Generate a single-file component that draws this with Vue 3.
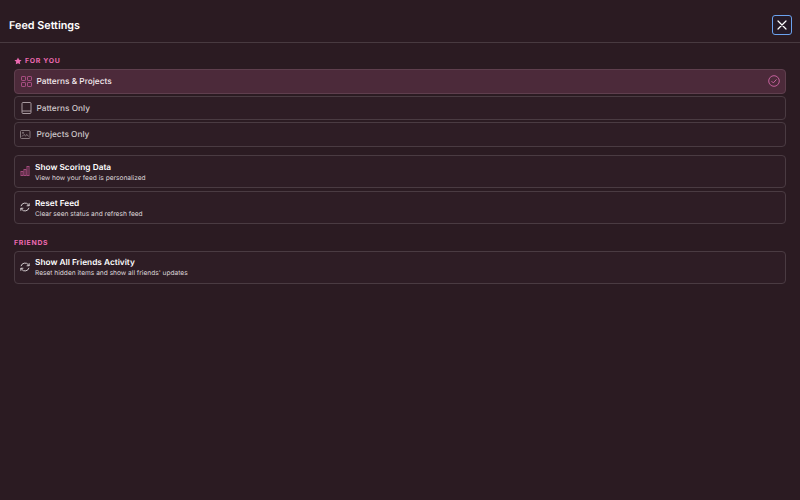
<script setup>
const feedOptions = [
  { label: 'Patterns & Projects', icon: 'grid', active: true },
  { label: 'Patterns Only', icon: 'book' },
  { label: 'Projects Only', icon: 'image' },
]
</script>

<template>
  <div class="page">
    <header class="head">
      <h1>Feed Settings</h1>
      <button class="close" aria-label="Close">
        <svg width="10" height="10" viewBox="0 0 10 10" fill="none" stroke="#fff" stroke-width="1.2" stroke-linecap="round"><path d="M1 1l8 8M9 1l-8 8"/></svg>
      </button>
    </header>
    <main class="body">
      <div class="label first">
        <svg width="8" height="8" viewBox="0 0 24 24" fill="#ec69b0"><path d="M12 1.500l3.300 6.900 7.500 1-5.500 5.200 1.400 7.500L12 18.400l-6.700 3.700 1.400-7.500-5.500-5.200 7.500-1z"/></svg>
        FOR YOU
      </div>
      <div class="opts">
        <div v-for="o in feedOptions" :key="o.label" class="opt" :class="{ active: o.active }">
          <svg v-if="o.icon === 'grid'" class="ic" width="11" height="11" viewBox="0 0 11 11" fill="none" stroke="#a94f84" stroke-width="1"><rect x=".5" y=".5" width="4" height="4" rx=".6"/><rect x="6.500" y=".5" width="4" height="4" rx=".6"/><rect x=".5" y="6.500" width="4" height="4" rx=".6"/><rect x="6.500" y="6.500" width="4" height="4" rx=".6"/></svg>
          <svg v-else-if="o.icon === 'book'" class="ic" width="11" height="12" viewBox="0 0 11 12" fill="none" stroke="#a89aa0" stroke-width="1"><rect x="1" y=".5" width="9" height="11" rx="1"/><path d="M1 9h9"/></svg>
          <svg v-else class="ic shift" width="11" height="9" viewBox="0 0 11 9" fill="none" stroke="#8f8287" stroke-width=".9"><rect x=".5" y=".5" width="9.500" height="8" rx="1"/><path d="M2 6.500l2-2 1.500 1.300 1.500-1.300 1.500 2"/><circle cx="3" cy="2.800" r=".6"/></svg>
          <span class="opt-text">{{ o.label }}</span>
          <svg v-if="o.active" class="check" width="12" height="12" viewBox="0 0 12 12" fill="none" stroke="#c4609c" stroke-width="1"><circle cx="6" cy="6" r="5.300"/><path d="M3.500 6.100l1.800 1.800 3.200-3.500"/></svg>
        </div>
      </div>
      <div class="acts">
        <div class="act">
          <svg class="ic" width="10" height="10" viewBox="0 0 10 10" fill="none" stroke="#a34a7d" stroke-width="1"><rect x="1" y="5.500" width="2" height="4"/><rect x="4" y="3.500" width="2" height="6"/><rect x="7" y=".5" width="2" height="9"/></svg>
          <div class="act-text"><b>Show Scoring Data</b><small>View how your feed is personalized</small></div>
        </div>
        <div class="act">
          <svg class="ic" width="10" height="10" viewBox="0 0 12 12" fill="none" stroke="#e0dadc" stroke-width="1.100"><path d="M1.200 5A5 5 0 0 1 10 3.200l1 1.300M10.800 7A5 5 0 0 1 2 8.800L1 7.500M11 1.500v3H8M1 10.500v-3h3"/></svg>
          <div class="act-text"><b>Reset Feed</b><small>Clear seen status and refresh feed</small></div>
        </div>
      </div>
      <div class="label friends">FRIENDS</div>
      <div class="act last">
        <svg class="ic" width="10" height="10" viewBox="0 0 12 12" fill="none" stroke="#e0dadc" stroke-width="1.100"><path d="M1.200 5A5 5 0 0 1 10 3.200l1 1.300M10.800 7A5 5 0 0 1 2 8.800L1 7.500M11 1.500v3H8M1 10.500v-3h3"/></svg>
        <div class="act-text"><b>Show All Friends Activity</b><small>Reset hidden items and show all friends' updates</small></div>
      </div>
    </main>
  </div>
</template>

<style>
html, body { margin: 0; background: #2b1b22; }
</style>

<style scoped>
.page { width: 800px; height: 500px; background: #2b1b22; font-family: Inter, sans-serif; color: #fff; box-sizing: border-box; text-rendering: geometricPrecision; }
.head { height: 43px; box-sizing: border-box; border-bottom: 1px solid #483a40; display: flex; align-items: center; justify-content: space-between; padding: 8px 8px 0 9px; }
h1 { margin: 0; font-size: 10.800px; font-weight: 600; }
.close { width: 20px; height: 20px; padding: 0; background: #251a26; border: 1.500px solid #6ba2ee; border-radius: 3px; display: flex; align-items: center; justify-content: center; }
.body { padding: 0 14px; }
.label { font-size: 6.900px; font-weight: 700; letter-spacing: .7px; color: #ec69b0; display: flex; align-items: center; gap: 3px; margin: 14px 0 4px; height: 9px; }
.label.first { margin-top: 13px; }
.label.friends { margin-top: 14px; margin-bottom: 4.500px; }
.opts, .acts { display: flex; flex-direction: column; gap: 2px; }
.acts { margin-top: 8px; gap: 3px; }
.opt, .act { border: 1px solid #4a3b42; border-radius: 4px; box-sizing: border-box; display: flex; align-items: center; background: #2e1d25; }
.opt { height: 24.500px; font-size: 8.300px; font-weight: 500; color: #cfc7ca; gap: 4.500px; padding: 0 5px 0 6px; }
.opt-text { padding-top: 2px; }
.opt.active { background: #4c2a3a; border-color: #5f3f4e; color: #f3e9ed; }
.check { margin-left: auto; }
.shift { margin-left: -1px; margin-right: 1px; }
.act { height: 33px; gap: 5px; padding: 0 5px; }
.act.last { height: 32.500px; }
.act-text { padding-top: 3px; }
.last .act-text { padding-top: 1px; }
.act b { display: block; font-size: 8.300px; font-weight: 600; line-height: 10px; }
.act small { display: block; font-size: 6.600px; color: #ddd6d9; line-height: 9px; margin-top: 1px; }
.ic { flex: none; }
</style>
